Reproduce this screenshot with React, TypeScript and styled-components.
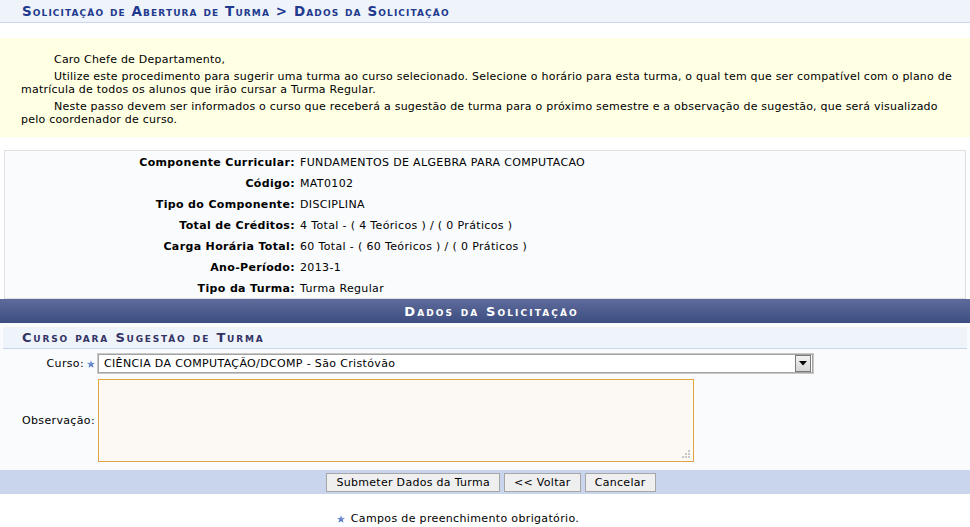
import React from 'react';
import styled, { createGlobalStyle } from 'styled-components';

const GlobalStyle = createGlobalStyle`
  html, body {
    margin: 0;
    padding: 0;
    background: #fff;
  }
  body {
    font-family: "DejaVu Sans", Verdana, sans-serif;
    font-size: 11px;
    letter-spacing: 0.35px;
    color: #000;
  }
`;

const Page = styled.div`
  width: 970px;
`;

const TitleBar = styled.h2`
  margin: 0;
  height: 22px;
  padding-left: 22px;
  display: flex;
  align-items: center;
  background: #eff3fa;
  border-bottom: 1px solid #c8d5ec;
  color: #223a8e;
  font-size: 13.5px;
  letter-spacing: 1.1px;
  font-weight: bold;
  font-variant: small-caps;
`;

const Description = styled.div`
  margin-top: 15px;
  padding: 15px 10px 11px 21px;
  background: #ffffe4;
  line-height: 13px;
  letter-spacing: 0.22px;
`;

const Paragraph = styled.p`
  margin: 0 0 4px;
  text-indent: 33px;
  &:last-child {
    margin-bottom: 0;
  }
`;

const InfoBox = styled.div`
  margin: 13px 4px 0;
  background: #f9fbfd;
  border: 1px solid #dedfe3;
  display: grid;
  grid-template-columns: 290px 1fr;
  grid-auto-rows: 21px;
  column-gap: 5px;
  align-items: center;
`;

const InfoLabel = styled.div`
  padding-top: 1px;
  text-align: right;
  font-weight: bold;
`;

const InfoValue = styled.div`
  padding-top: 1px;
`;

const Form = styled.div`
  background: #f9fbfd;
`;

const Caption = styled.div`
  height: 24px;
  padding-left: 13px;
  display: flex;
  align-items: center;
  justify-content: center;
  background: linear-gradient(#5d6c9b, #3e4d81);
  color: #fff;
  font-weight: bold;
  font-variant: small-caps;
  font-size: 13px;
  letter-spacing: 2.1px;
`;

const FormBody = styled.div`
  padding: 4px 3px 8px;
`;

const SubTitle = styled.div`
  height: 21px;
  padding-left: 19px;
  display: flex;
  align-items: center;
  background: #eff3fa;
  border-bottom: 1px solid #c8d5ec;
  color: #333366;
  font-weight: bold;
  font-variant: small-caps;
  font-size: 13px;
  letter-spacing: 1.8px;
`;

const FieldGrid = styled.div`
  margin-top: 5px;
  display: grid;
  grid-template-columns: 92px 1fr;
  column-gap: 3px;
  row-gap: 6px;
  align-items: center;
`;

const FieldLabel = styled.label`
  display: flex;
  justify-content: flex-end;
  align-items: center;
  gap: 3px;
`;

const SelectBox = styled.div`
  width: 708px;
  height: 17px;
  border: 1px solid #a3a3a3;
  background: #fff;
  display: flex;
  align-items: center;
  justify-content: space-between;
  padding-left: 5px;
  box-sizing: content-box;
  outline: 1px solid #c9c9c9;
`;

const SelectArrow = styled.div`
  width: 14px;
  height: 15px;
  margin-right: 1px;
  border: 1px solid #7a7a7a;
  background: linear-gradient(#f2f2f2, #d6d6d6);
  display: flex;
  align-items: center;
  justify-content: center;
`;

const TextArea = styled.div`
  position: relative;
  width: 594px;
  height: 81px;
  border: 1px solid #e2a441;
  background: #fcf9f4;
`;

const Grip = styled.svg`
  position: absolute;
  right: 3px;
  bottom: 3px;
`;

const Footer = styled.div`
  height: 24px;
  background: #c8d5ec;
  display: flex;
  align-items: center;
  justify-content: center;
  gap: 4px;
  padding-left: 12px;
`;

const Button = styled.button`
  height: 19px;
  padding: 0 9px;
  border: 1px solid #a6a6a6;
  background: #efefef;
  font-family: inherit;
  font-size: 11px;
  letter-spacing: 0.3px;
  color: #000;
`;

const Note = styled.div`
  margin-top: 18px;
  display: flex;
  justify-content: center;
  align-items: center;
  gap: 6px;
  padding-right: 54px;
`;

const Star: React.FC = () => (
  <svg width="8" height="8" viewBox="0 0 10 10">
    <defs>
      <linearGradient id="sg" x1="0" y1="0" x2="0" y2="1">
        <stop offset="0" stopColor="#9fb6e6" />
        <stop offset="1" stopColor="#3c63b8" />
      </linearGradient>
    </defs>
    <polygon
      points="5,0 6.3,3.4 10,3.6 7.1,5.9 8.1,9.6 5,7.5 1.9,9.6 2.9,5.9 0,3.6 3.7,3.4"
      fill="url(#sg)"
    />
  </svg>
);

const info: [string, string][] = [
  ['Componente Curricular:', 'FUNDAMENTOS DE ALGEBRA PARA COMPUTACAO'],
  ['Código:', 'MAT0102'],
  ['Tipo do Componente:', 'DISCIPLINA'],
  ['Total de Créditos:', '4 Total - ( 4 Teóricos ) / ( 0 Práticos )'],
  ['Carga Horária Total:', '60 Total - ( 60 Teóricos ) / ( 0 Práticos )'],
  ['Ano-Período:', '2013-1'],
  ['Tipo da Turma:', 'Turma Regular'],
];

export default function App() {
  return (
    <Page>
      <GlobalStyle />
      <TitleBar>Solicitação de Abertura de Turma &gt; Dados da Solicitação</TitleBar>

      <Description>
        <Paragraph>Caro Chefe de Departamento,</Paragraph>
        <Paragraph>
          Utilize este procedimento para sugerir uma turma ao curso selecionado. Selecione o horário para esta
          turma, o qual tem que ser compatível com o plano de matrícula de todos os alunos que irão cursar a Turma
          Regular.
        </Paragraph>
        <Paragraph>
          Neste passo devem ser informados o curso que receberá a sugestão de turma para o próximo semestre e a
          observação de sugestão, que será visualizado pelo coordenador de curso.
        </Paragraph>
      </Description>

      <InfoBox>
        {info.map(([label, value]) => (
          <React.Fragment key={label}>
            <InfoLabel>{label}</InfoLabel>
            <InfoValue>{value}</InfoValue>
          </React.Fragment>
        ))}
      </InfoBox>

      <Form>
        <Caption>Dados da Solicitação</Caption>
        <FormBody>
          <SubTitle>Curso para Sugestão de Turma</SubTitle>
          <FieldGrid>
            <FieldLabel>
              Curso: <Star />
            </FieldLabel>
            <SelectBox>
              <span>CIÊNCIA DA COMPUTAÇÃO/DCOMP - São Cristóvão</span>
              <SelectArrow>
                <svg width="8" height="5" viewBox="0 0 8 5">
                  <polygon points="0,0 8,0 4,4.5" fill="#000" />
                </svg>
              </SelectArrow>
            </SelectBox>
            <FieldLabel>Observação:</FieldLabel>
            <TextArea>
              <Grip width="9" height="9" viewBox="0 0 9 9">
                <g fill="#c8c8c8">
                  <rect x="7" y="1" width="2" height="2" />
                  <rect x="4" y="4" width="2" height="2" />
                  <rect x="7" y="4" width="2" height="2" />
                  <rect x="1" y="7" width="2" height="2" />
                  <rect x="4" y="7" width="2" height="2" />
                  <rect x="7" y="7" width="2" height="2" />
                </g>
              </Grip>
            </TextArea>
          </FieldGrid>
        </FormBody>
        <Footer>
          <Button>Submeter Dados da Turma</Button>
          <Button>&lt;&lt; Voltar</Button>
          <Button>Cancelar</Button>
        </Footer>
      </Form>

      <Note>
        <Star />
        <span>Campos de preenchimento obrigatório.</span>
      </Note>
    </Page>
  );
}
